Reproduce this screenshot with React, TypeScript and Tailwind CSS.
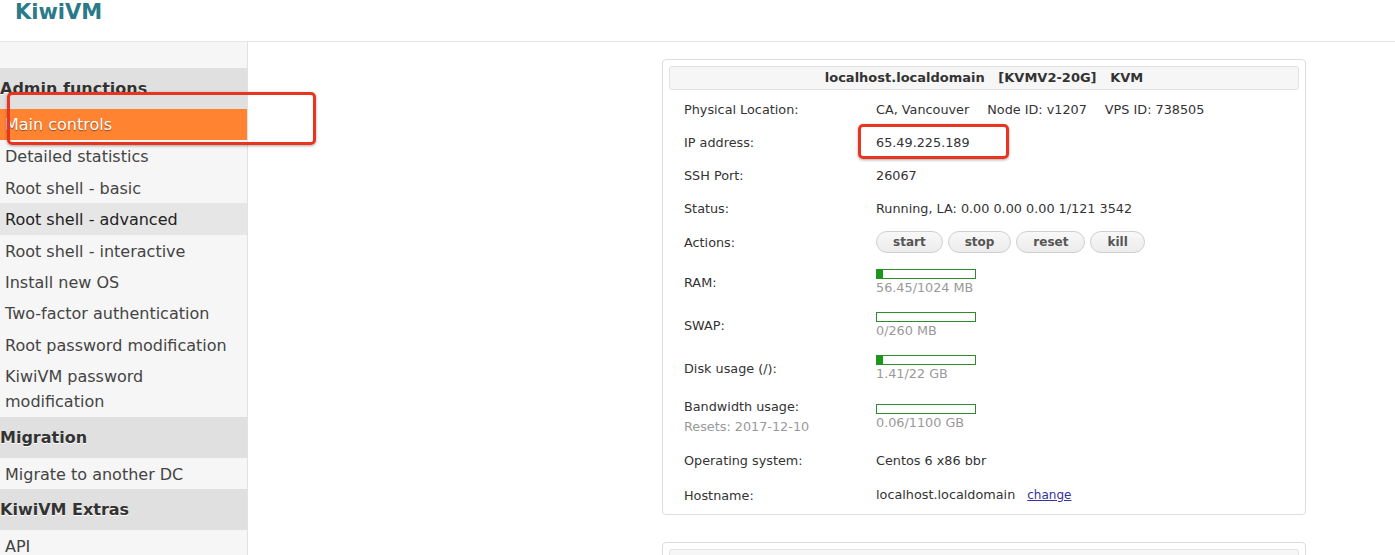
const items = [
  "Detailed statistics",
  "Root shell - basic",
  "Root shell - advanced",
  "Root shell - interactive",
  "Install new OS",
  "Two-factor authentication",
  "Root password modification",
  "KiwiVM password modification",
];

function SideHeader({ children }: { children: React.ReactNode }) {
  return (
    <div className="h-[41px] flex items-center bg-[#e0e0e0] pl-0 pt-[1px] font-bold text-[#333] [text-shadow:0_1px_0_#fff]">
      {children}
    </div>
  );
}

function SideItem({ label, hover }: { label: string; hover?: boolean }) {
  return (
    <div
      className={
        "pt-[4px] pb-[2.4px] pl-[5px] pr-2 leading-[25px] " +
        (hover ? "bg-[#e6e6e6] text-[#222]" : "text-[#444]")
      }
    >
      {label}
    </div>
  );
}

function Bar({ pct, text }: { pct: number; text: string }) {
  return (
    <div className="flex flex-col">
      <div className="w-[100px] h-[10px] border border-[#2c8c2c] bg-white">
        <div className="h-full bg-[#169a16]" style={{ width: `${pct}%` }} />
      </div>
      <div className="text-[#999] leading-[17px]">{text}</div>
    </div>
  );
}

function Row({
  label,
  children,
  pad = "py-2",
}: {
  label: React.ReactNode;
  children: React.ReactNode;
  pad?: string;
}) {
  return (
    <div className={"flex items-center " + pad}>
      <div className="w-[192px] shrink-0">{label}</div>
      <div className="flex-1">{children}</div>
    </div>
  );
}

export default function App() {
  return (
    <div className="relative min-h-[555px] bg-white font-['DejaVu_Sans',Verdana,sans-serif] text-[#333]">
      {/* top bar */}
      <div className="h-[42px] border-b border-[#e6e6e6] pl-[15px]">
        <div className="text-[21px] font-bold leading-[24px] text-[#2a7a89]">KiwiVM</div>
      </div>

      <div className="flex">
        {/* sidebar */}
        <div className="w-[248px] shrink-0 bg-[#f6f6f6] border-r border-[#e2e2e2] text-[16px]">
          <div className="h-[26px]" />
          <SideHeader>Admin functions</SideHeader>
          <div className="h-[31.4px] flex items-center pl-[5px] pt-[1px] bg-[#ff8330] text-white [text-shadow:0_1px_1px_rgba(0,0,0,0.45)]">
            Main controls
          </div>
          {items.map((it) => (
            <SideItem key={it} label={it} hover={it === "Root shell - advanced"} />
          ))}
          <SideHeader>Migration</SideHeader>
          <SideItem label="Migrate to another DC" />
          <SideHeader>KiwiVM Extras</SideHeader>
          <SideItem label="API" />
        </div>

        {/* main */}
        <div className="flex-1 pl-[414px] pt-[17px] text-[12.8px]">
          <div className="w-[644px] border border-[#dddddd] rounded-[4px] p-[6px] pb-[2px]">
            <div className="h-[24px] flex items-center justify-center bg-[#f6f6f6] border border-[#e2e2e2] rounded-[3px] font-bold text-[13px] text-[#333] whitespace-pre">
              {"localhost.localdomain   [KVMV2-20G]   KVM"}
            </div>
            <div className="pl-[15px] pt-[3px] leading-[17px]">
              <Row label="Physical Location:">
                <div className="flex gap-[18px]">
                  <span>CA, Vancouver</span>
                  <span>Node ID: v1207</span>
                  <span>VPS ID: 738505</span>
                </div>
              </Row>
              <Row label="IP address:">65.49.225.189</Row>
              <Row label="SSH Port:">26067</Row>
              <Row label="Status:">Running, LA: 0.00 0.00 0.00 1/121 3542</Row>
              <div className="flex items-center py-[6px]">
                <div className="w-[192px] shrink-0">Actions:</div>
                <div className="flex gap-[5px]">
                  {["start", "stop", "reset", "kill"].map((b) => (
                    <button
                      key={b}
                      className="h-[22px] px-4 rounded-full border border-[#cfcfcf] bg-gradient-to-b from-[#f8f8f8] to-[#ececec] text-[12px] font-bold text-[#555]"
                    >
                      {b}
                    </button>
                  ))}
                </div>
              </div>
              <Row label="RAM:" pad="pt-[10px] pb-2">
                <Bar pct={6} text="56.45/1024 MB" />
              </Row>
              <Row label="SWAP:">
                <Bar pct={0} text="0/260 MB" />
              </Row>
              <Row label="Disk usage (/):">
                <Bar pct={6.5} text="1.41/22 GB" />
              </Row>
              <Row
                pad="py-[7px]"
                label={
                  <div className="leading-[20px]">
                    <div>Bandwidth usage:</div>
                    <div className="text-[#999]">Resets: 2017-12-10</div>
                  </div>
                }
              >
                <Bar pct={0} text="0.06/1100 GB" />
              </Row>
              <Row label="Operating system:">Centos 6 x86 bbr</Row>
              <Row label="Hostname:" pad="pt-[9px] pb-[8px]">
                <span>localhost.localdomain</span>
                <a className="ml-[12px] text-[12px] text-[#333399] underline" href="#">
                  change
                </a>
              </Row>
            </div>
          </div>

          <div className="mt-[27px] w-[644px] border border-[#dddddd] rounded-[4px] p-[6px]">
            <div className="h-[24px] flex items-center justify-center bg-[#f6f6f6] border border-[#e2e2e2] rounded-[3px] font-bold text-[13px] text-[#333]">
              PTR Records (Reverse DNS)
            </div>
          </div>
        </div>
      </div>

      {/* red annotation boxes */}
      <div className="absolute left-[7px] top-[92px] w-[309px] h-[53px] border-[3px] border-[#e8351f] rounded-[5px] shadow-[0_1px_3px_rgba(0,0,0,0.35)]" />
      <div className="absolute left-[858px] top-[124px] w-[151px] h-[35px] border-[3px] border-[#e8351f] rounded-[5px] shadow-[0_1px_3px_rgba(0,0,0,0.35)]" />
    </div>
  );
}
